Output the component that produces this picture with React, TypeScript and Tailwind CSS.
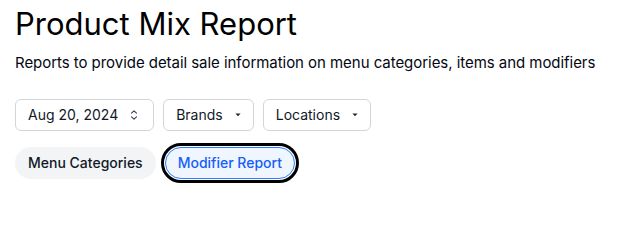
import React from 'react'

function UpDown() {
  return (
    <svg width="8" height="12" viewBox="0 0 8 12" fill="none" className="text-gray-700">
      <path d="M1.5 4.2L4 1.8l2.5 2.4M1.5 7.8L4 10.2l2.5-2.4" stroke="currentColor" strokeWidth="1.1" strokeLinecap="round" strokeLinejoin="round" />
    </svg>
  )
}

function Caret() {
  return (
    <svg width="6" height="6" viewBox="0 0 6 6" className="text-gray-800">
      <path d="M0.4 1.6h5.2L3 4.3z" fill="currentColor" />
    </svg>
  )
}

export default function App() {
  return (
    <div className="px-[15px] pt-[6px] font-['Inter',sans-serif] text-black bg-white min-h-[201px]">
      <h1 className="text-[31px] leading-9">Product Mix Report</h1>
      <p className="mt-[9px] text-[15px] leading-6 tracking-[-0.003em] text-gray-950">
        Reports to provide detail sale information on menu categories, items and modifiers
      </p>

      {/* filters */}
      <div className="mt-6 flex gap-[9px]">
        <button className="h-8 pl-3 pr-[15px] flex items-center gap-3 rounded-md border border-gray-300 bg-white text-sm text-gray-900">
          Aug 20, 2024
          <UpDown />
        </button>
        <button className="h-8 pl-3 pr-3 flex items-center gap-3 rounded-md border border-gray-300 bg-white text-sm text-gray-900">
          Brands
          <Caret />
        </button>
        <button className="h-8 pl-3 pr-3 flex items-center gap-3 rounded-md border border-gray-300 bg-white text-sm text-gray-900">
          Locations
          <Caret />
        </button>
      </div>

      {/* report tabs */}
      <div className="mt-4 flex gap-[9px]">
        <button className="h-8 px-[13px] rounded-full bg-gray-100 text-sm font-medium text-gray-900">
          Menu Categories
        </button>
        <button className="h-8 px-3 rounded-full border border-blue-500 bg-blue-50 text-sm font-medium text-blue-600 outline-[3px] outline-black outline-offset-1">
          Modifier Report
        </button>
      </div>
    </div>
  )
}
